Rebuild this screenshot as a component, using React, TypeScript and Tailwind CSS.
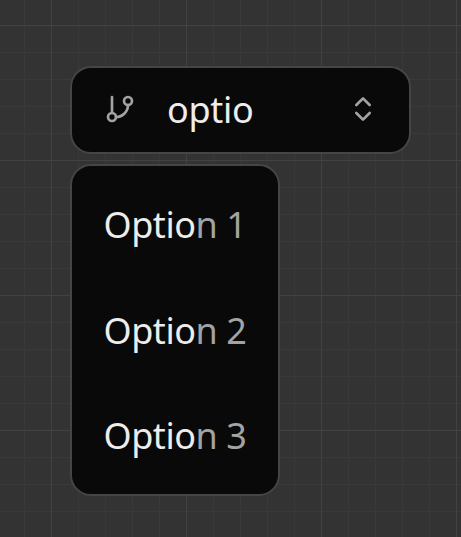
import React from "react";
import { ChevronsUpDown, GitBranch } from "lucide-react";

const options = ["Option 1", "Option 2", "Option 3"];
const query = "optio";

function Grid() {
  return (
    <svg className="absolute inset-0 h-full w-full" aria-hidden="true">
      <defs>
        <pattern id="minor" x="24" y="25" width="27" height="27" patternUnits="userSpaceOnUse">
          <path d="M0.5 0V27M0 0.5H27" stroke="#393939" strokeWidth="1" />
        </pattern>
        <pattern id="major" x="51" y="25" width="135" height="135" patternUnits="userSpaceOnUse">
          <path d="M0.5 0V135M0 0.5H135" stroke="#424242" strokeWidth="1" />
        </pattern>
      </defs>
      <rect width="100%" height="100%" fill="url(#minor)" />
      <rect width="100%" height="100%" fill="url(#major)" />
    </svg>
  );
}

export default function App() {
  return (
    <main className="relative h-[537px] w-[461px] overflow-hidden bg-[#333333] font-['Noto_Sans','Open_Sans',sans-serif] text-4xl text-[#ededed]">
      <Grid />
      <div className="relative flex flex-col items-start gap-[10px] pt-[66px] pl-[70px]">
        <div className="flex h-[88px] w-[341px] items-center rounded-[21px] border-2 border-[#454545] bg-[#090909] pr-[30.5px] pb-0.5 pl-8">
          <GitBranch className="size-8 shrink-0 text-[#a3a3a3]" />
          <span className="ml-[31px] flex-1 pt-0.5 tracking-[-0.3px]">{query}</span>
          <ChevronsUpDown className="size-8 shrink-0 text-[#a3a3a3]" />
        </div>
        <ul className="flex h-[332px] w-[210px] flex-col rounded-[21px] border-2 border-[#454545] bg-[#090909] pt-[6px] pb-[5px]">
          {options.map((option) => (
            <li key={option} className="flex flex-1 items-center pl-[31.5px] tracking-[-0.45px] whitespace-pre text-[#a3a3a3]">
              <span className="text-[#ededed]">{option.slice(0, query.length)}</span>
              {option.slice(query.length)}
            </li>
          ))}
        </ul>
      </div>
    </main>
  );
}
